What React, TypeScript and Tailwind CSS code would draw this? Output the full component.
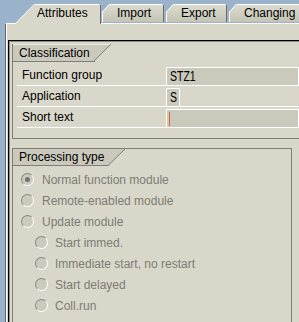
import React from "react";

function ActiveTab() {
  return (
    <div className="relative z-10 w-[86px] h-[20px] -mb-px shrink-0">
      <svg className="absolute inset-0" width="86" height="20" viewBox="0 0 86 20">
        <polygon points="0,20 19,1 85,1 85,20" fill="#d9d7c9" />
        <polyline points="0.5,19.5 19.2,0.5 84.5,0.5" fill="none" stroke="#ffffff" />
        <line x1="85.5" y1="1" x2="85.5" y2="20" stroke="#6e6d66" />
      </svg>
      <span className="relative block pl-[22px] leading-[19px] text-black">Attributes</span>
    </div>
  );
}

function Tab({ label, w, id }: { label: string; w: number; id: string }) {
  const widthClass = w === 64 ? "w-[64px]" : w === 63 ? "w-[63px]" : "w-[80px]";
  return (
    <div className={`relative h-[18px] mb-px shrink-0 ${widthClass}`}>
      <svg className="absolute inset-0" width={w} height="18" viewBox={`0 0 ${w} 18`}>
        <defs>
          <linearGradient id={id} x1="0" y1="0" x2="0" y2="1">
            <stop offset="0" stopColor="#dcdbcf" />
            <stop offset="1" stopColor="#c4c3b6" />
          </linearGradient>
        </defs>
        <polygon points={`1,18 1,8 8,0.5 ${w - 2},0.5 ${w - 2},18`} fill={`url(#${id})`} />
        <polyline points={`1.5,18 1.5,8 8.2,0.5 ${w - 2.5},0.5`} fill="none" stroke="#ffffff" />
        <line x1={w - 1.5} y1="1" x2={w - 1.5} y2="18" stroke="#6e6d66" />
      </svg>
      <span className="relative block pl-[16px] leading-[18px] text-black whitespace-nowrap">{label}</span>
    </div>
  );
}

function Row({ label, children }: { label: string; children: React.ReactNode }) {
  return (
    <div className="flex h-[21px] border-b border-white items-end">
      <div className="w-[149px] h-full flex items-center pl-[5px] shrink-0 text-black">{label}</div>
      {children}
    </div>
  );
}

function FieldText({ text }: { text: string }) {
  return (
    <span className="inline-block text-[14px] leading-[17px] text-black scale-x-75 origin-left">{text}</span>
  );
}

function Radio({ label, checked, sub }: { label: string; checked?: boolean; sub?: boolean }) {
  return (
    <div className={`flex items-center h-[21px] ${sub ? "pl-[22px]" : "pl-[8px]"}`}>
      <span className="w-[13px] h-[13px] rounded-full border border-t-[#8a8981] border-l-[#8a8981] border-b-white border-r-white bg-[#cbcabd] flex items-center justify-center shrink-0">
        {checked && <span className="w-[5px] h-[5px] rounded-full bg-[#74736c]" />}
      </span>
      <span className={`${sub ? "ml-[7px]" : "ml-[8px]"} text-[#7d7c75] whitespace-nowrap`}>{label}</span>
    </div>
  );
}

export default function App() {
  return (
    <div className="w-[299px] h-[322px] overflow-hidden bg-[#9ab3ca] font-['Liberation_Sans',Arial,sans-serif] text-[12px]">
      <div className="flex h-[23px] pl-[15px] items-end">
        <ActiveTab />
        <Tab label="Import" w={64} id="g1" />
        <Tab label="Export" w={63} id="g2" />
        <Tab label="Changing" w={80} id="g3" />
      </div>
      <div className="ml-[5px] h-[299px] bg-[#d9d7c9] border-l border-t border-l-[#5b6670] border-t-white shadow-[inset_1px_0_0_#ffffff] pt-[16px] pl-[2px]">
        <div className="h-full border-t border-l border-black shadow-[inset_1px_1px_0_#8d8c84] pl-[3px] pt-[3px]">
          {/* Classification */}
          <div className="border-l border-b border-[#7f7e76] h-[95px]">
            <div className="relative h-[18px] w-[99px]">
              <svg className="absolute inset-0" width="99" height="18" viewBox="0 0 99 18">
                <polygon points="0,0 98,0 81,17 0,17" fill="#cac9bc" />
                <line x1="0" y1="0.5" x2="97" y2="0.5" stroke="#ecebe2" />
                <line x1="98" y1="0" x2="81" y2="17" stroke="#7f7e76" />
                <line x1="0" y1="17.5" x2="82" y2="17.5" stroke="#7f7e76" />
              </svg>
              <span className="relative block pl-[6px] leading-[18px] text-black">Classification</span>
            </div>
            <div className="mt-[3px] ml-[4px]">
              <Row label="Function group">
                <div className="flex-1 h-[19px] -mb-px border border-white bg-[#cac9bb] pl-[3px] flex items-center overflow-hidden">
                  <FieldText text="STZ1" />
                </div>
              </Row>
              <Row label="Application">
                <div className="w-[14px] h-[19px] -mb-px border border-white bg-[#cac9bb] pl-[3px] flex items-center overflow-hidden">
                  <FieldText text="S" />
                </div>
              </Row>
              <Row label="Short text">
                <div className="flex-1 h-[19px] -mb-px border border-white bg-[#cac9bb] pl-[2px] flex items-center">
                  <span className="w-px h-[14px] bg-[#e0601c]" />
                </div>
              </Row>
            </div>
          </div>
          {/* Processing type */}
          <div className="mt-[9px] w-[280px] h-[200px] border-t border-l border-r border-[#7f7e76]">
            <div className="relative h-[17px] w-[113px]">
              <svg className="absolute inset-0" width="113" height="17" viewBox="0 0 113 17">
                <polygon points="0,0 112,0 95,16.5 0,16.5" fill="#cac9bc" />
                <line x1="112" y1="0" x2="95" y2="16.5" stroke="#7f7e76" />
                <line x1="0" y1="16.5" x2="95.5" y2="16.5" stroke="#7f7e76" />
              </svg>
              <span className="relative block pl-[6px] leading-[17px] text-black">Processing type</span>
            </div>
            <div className="mt-[3px]">
              <Radio label="Normal function module" checked />
              <Radio label="Remote-enabled module" />
              <Radio label="Update module" />
              <Radio label="Start immed." sub />
              <Radio label="Immediate start, no restart" sub />
              <Radio label="Start delayed" sub />
              <Radio label="Coll.run" sub />
            </div>
          </div>
        </div>
      </div>
    </div>
  );
}
